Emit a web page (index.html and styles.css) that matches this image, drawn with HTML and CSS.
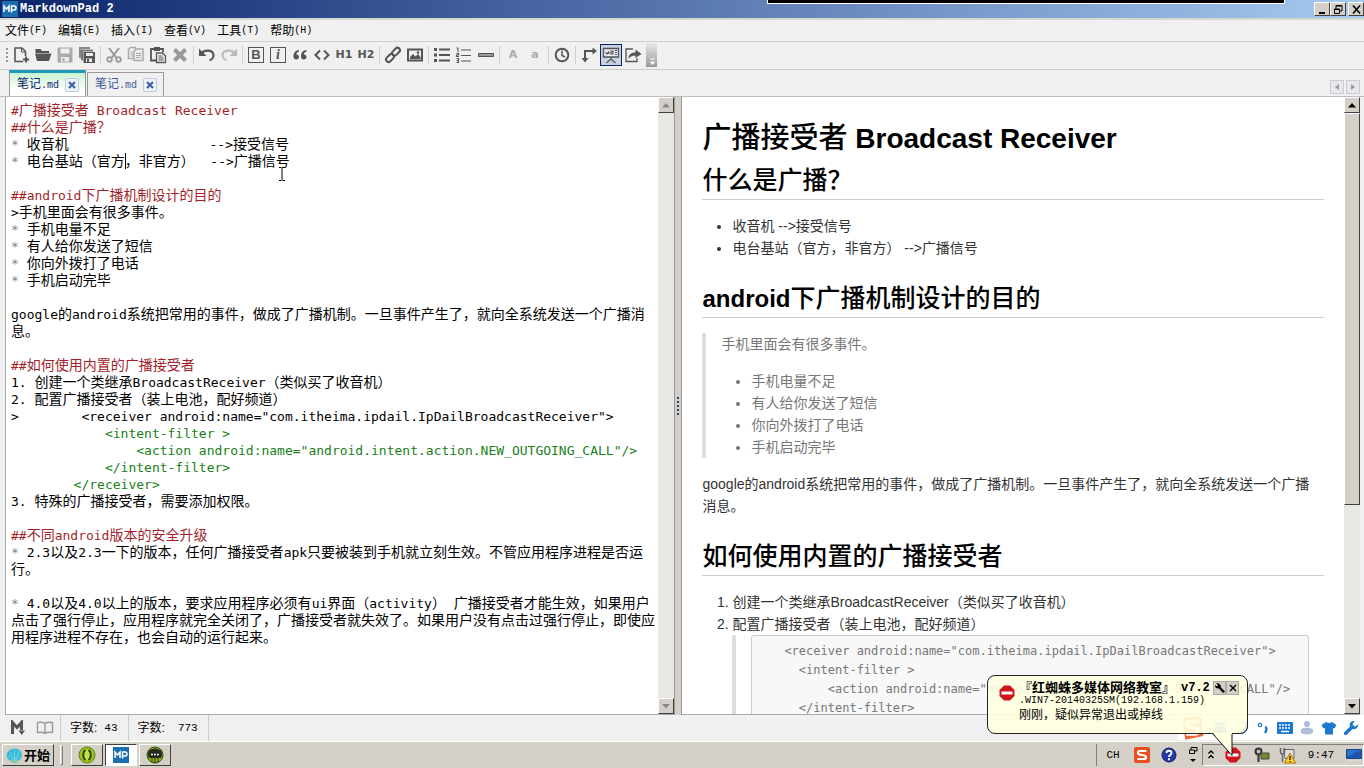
FILE: index.html
```html
<!DOCTYPE html>
<html lang="zh-CN">
<head>
<meta charset="utf-8">
<title>MarkdownPad 2</title>
<link rel="stylesheet" href="styles.css">
</head>
<body>
<div class="app">
  <header class="titlebar">
    <svg class="app-logo" width="16" height="16" viewBox="0 0 16 16"><rect width="16" height="16" fill="#1b6fae"/><path d="M2 11V5l2.500 3L7 5v6M9.500 11.500V5H12a2 2 0 010 4H9.500" fill="none" stroke="#fff" stroke-width="1.500"/></svg>
    <h1 class="titlebar-text">MarkdownPad 2</h1>
    <div class="window-buttons">
      <button class="win-btn" aria-label="最小化"><svg width="13" height="11"><path d="M3 9h6" stroke="#000" stroke-width="2"/></svg></button>
      <button class="win-btn" aria-label="还原"><svg width="13" height="11"><path d="M4 5V1.500h6V7H8M4 2h6M2.500 5h5v4.500h-5zM2 5.500h6" fill="none" stroke="#000"/></svg></button>
      <button class="win-btn win-close" aria-label="关闭"><svg width="13" height="11"><path d="M3 1.500l7 8M10 1.500l-7 8" stroke="#000" stroke-width="1.600"/></svg></button>
    </div>
    <div class="top-strip"></div>
  </header>

  <nav class="menubar">
    <button>文件<span class="key">(F)</span></button>
    <button>编辑<span class="key">(E)</span></button>
    <button>插入<span class="key">(I)</span></button>
    <button>查看<span class="key">(V)</span></button>
    <button>工具<span class="key">(T)</span></button>
    <button>帮助<span class="key">(H)</span></button>
  </nav>

  <div class="toolbar">
    <span class="grip"></span>
    <button aria-label="新建"><svg viewBox="0 0 18 18"><path d="M11 15.500H3V2h7l3.500 3.500V10" fill="none" stroke="#555" stroke-width="1.600"/><path d="M9.500 2v4h4" fill="none" stroke="#555"/><path d="M14 10.500v6M11 13.500h6" stroke="#555" stroke-width="2"/></svg></button>
    <button aria-label="打开"><svg viewBox="0 0 18 18"><path d="M1.500 3h5l1.500 2h7v2H1.500z" fill="#555"/><path d="M1 7.500H17.500l-2.500 7.500H3z" fill="#555"/></svg></button>
    <button aria-label="保存" class="off"><svg viewBox="0 0 18 18"><path d="M1.500 1.500h15v15h-15z" fill="#aaa"/><path d="M4.500 2.500h9v5h-9zM5 11h8v4.500H5z" fill="#eee"/><path d="M6.500 12h2v3h-2z" fill="#aaa"/></svg></button>
    <button aria-label="全部保存"><svg viewBox="0 0 18 18"><path d="M1 1h11v2H3v9H1z" fill="#888"/><path d="M3 3.500h12v2H5v9H3z" fill="#777"/><path d="M5.500 6h11.500v11H5.500z" fill="#555"/><path d="M8 7h7v3H8zM8 12.500h6V16H8z" fill="#eee"/><path d="M9 13h2v3H9z" fill="#555"/></svg></button>
    <i class="sep"></i>
    <button aria-label="剪切"><svg viewBox="0 0 18 18"><path d="M4 2l7.500 10M14 2L6.500 12" stroke="#999" stroke-width="2" fill="none"/><circle cx="4.500" cy="13.500" r="2.300" fill="none" stroke="#999" stroke-width="1.700"/><circle cx="13.500" cy="13.500" r="2.300" fill="none" stroke="#999" stroke-width="1.700"/></svg></button>
    <button aria-label="复制"><svg viewBox="0 0 18 18"><path d="M6.500 12.500h-5v-9l2-2h5v3" fill="none" stroke="#aaa" stroke-width="1.500"/><path d="M3.500 6h3M3.500 8h3M3.500 10h3" stroke="#aaa"/><path d="M7 5.500l2-2.500h7v11.500H7z" fill="#eee" stroke="#aaa" stroke-width="1.500"/><path d="M9 7.500h5M9 9.500h5M9 11.500h5" stroke="#aaa"/></svg></button>
    <button aria-label="粘贴"><svg viewBox="0 0 18 18"><path d="M7 14.500H2V3h12v3" fill="none" stroke="#555" stroke-width="1.800"/><path d="M5 1h6v4H5z" fill="#555"/><path d="M7.500 7h6l3 3v6.500h-9z" fill="#eee" stroke="#555" stroke-width="1.300"/><path d="M9.500 10h4M9.500 12h5M9.500 14h5" stroke="#555"/></svg></button>
    <button aria-label="删除"><svg viewBox="0 0 18 18"><path d="M3.500 3.500l11 11M14.500 3.500l-11 11" stroke="#999" stroke-width="4"/></svg></button>
    <i class="sep"></i>
    <button aria-label="撤消"><svg viewBox="0 0 18 18"><path d="M3.500 7.500C7 3 15 4 15.500 9c0 3-2 5-4 5" fill="none" stroke="#555" stroke-width="2.200"/><path d="M1 2.500V10h7.500z" fill="#555"/></svg></button>
    <button aria-label="重做"><svg viewBox="0 0 18 18"><path d="M14.500 7.500C11 3 3 4 2.500 9c0 3 2 5 4 5" fill="none" stroke="#bbb" stroke-width="2.200"/><path d="M17 2.500V10H9.500z" fill="#bbb"/></svg></button>
    <i class="sep"></i>
    <button class="boxed" aria-label="粗体"><b>B</b></button>
    <button class="boxed" aria-label="斜体"><em>i</em></button>
    <button aria-label="引用"><svg viewBox="0 0 18 18"><path d="M8 4C4 4.500 2.500 7 2.500 10.500c0 2 1 3 2.700 3S8 12.500 8 11 7 8.500 5.500 8.500C5.500 7 6.500 6 8 5.600zM15.500 4c-4 .5-5.500 3-5.500 6.500 0 2 1 3 2.700 3s2.800-1 2.800-2.500-1-2.500-2.500-2.500c0-1.500 1-2.500 2.500-2.900z" fill="#555"/></svg></button>
    <button aria-label="代码"><svg viewBox="0 0 18 18"><path d="M7 4.500L2.500 9 7 13.500M11 4.500L15.500 9 11 13.500" fill="none" stroke="#555" stroke-width="2"/></svg></button>
    <button class="label">H1</button>
    <button class="label">H2</button>
    <i class="sep"></i>
    <button aria-label="链接"><svg viewBox="0 0 18 18"><g fill="none" stroke="#555" stroke-width="2"><rect x="-4.500" y="-2.500" width="9" height="5" rx="2.500" transform="translate(12 5.700) rotate(-45)"/><rect x="-4.500" y="-2.500" width="9" height="5" rx="2.500" transform="translate(6 12) rotate(-45)"/></g></svg></button>
    <button aria-label="图片"><svg viewBox="0 0 18 18"><path d="M2 3.500h14v11H2z" fill="none" stroke="#555" stroke-width="2"/><path d="M4 13v-2l3-3 2.500 2.500L12 8l2.500 3v2z" fill="#555"/><circle cx="12" cy="6.500" r="1.300" fill="#555"/></svg></button>
    <i class="sep"></i>
    <button aria-label="无序列表"><svg viewBox="0 0 18 18"><path d="M1 3.500h3M1 9h3M1 14.500h3" stroke="#555" stroke-width="3"/><path d="M6 3.500h11M6 9h11M6 14.500h11" stroke="#555" stroke-width="2"/></svg></button>
    <button aria-label="有序列表"><svg viewBox="0 0 18 18"><path d="M6 4h10M6 9.500h10M6 15h10" stroke="#555" stroke-width="1.200"/><path d="M1.500 2H3v4M1.500 7.500h2v1.500h-2v1.500h2.500M1.500 12.500h2v4h-2M1.500 14.500h2" fill="none" stroke="#555" stroke-width="1.100"/></svg></button>
    <button aria-label="水平线"><svg viewBox="0 0 18 18"><path d="M1.500 7.500h15v3h-15z" fill="#999" stroke="#555"/></svg></button>
    <i class="sep"></i>
    <button class="label faint">A</button>
    <button class="label faint">a</button>
    <i class="sep"></i>
    <button aria-label="时间"><svg viewBox="0 0 18 18"><circle cx="9" cy="9" r="6.300" fill="none" stroke="#555" stroke-width="2"/><path d="M9 4.500V9.500l3 1.500" fill="none" stroke="#555" stroke-width="1.500"/></svg></button>
    <i class="sep"></i>
    <button aria-label="同步"><svg viewBox="0 0 18 18"><path d="M5 13V5h8" fill="none" stroke="#555" stroke-width="2"/><path d="M1.500 12h7L5 16.500zM12.500 1.500v7L17 5z" fill="#555"/></svg></button>
    <button class="pressed" aria-label="预览"><svg viewBox="0 0 18 18"><path d="M1.500 2.500h15v8.500h-15z" fill="#eee" stroke="#555" stroke-width="1.300"/><path d="M3.500 6l1.500 2 1.500-2 1 2M9 5v3h2V5zM13 4.500h2M13 6.500h2M13 8.500h2M9 11v3M9 13l-4.500 4M9 13l4.500 4" fill="none" stroke="#555" stroke-width="1.200"/></svg></button>
    <button aria-label="导出"><svg viewBox="0 0 18 18"><path d="M9 3H2v12.500h11V12" fill="none" stroke="#555" stroke-width="1.300"/><path d="M4.500 13c0-5 3-6.500 7-6.500V3.500L17.500 8 11.500 12V9.500c-3 0-5 .5-7 3.500z" fill="#555"/></svg></button>
    <button class="overflow" aria-label="更多"><svg viewBox="0 0 10 24"><path d="M3 16h5M3.500 19h4L5.500 21.500z" stroke="#fff" fill="#fff"/></svg></button>
  </div>

  <div class="tabs">
    <div class="tab active"><span>笔记<span class="key">.md</span></span><button class="tab-close" aria-label="关闭"><svg width="10" height="10"><path d="M2 2l6 6M8 2l-6 6" stroke="#33609c" stroke-width="2"/></svg></button></div>
    <div class="tab"><span>笔记<span class="key">.md</span></span><button class="tab-close" aria-label="关闭"><svg width="10" height="10"><path d="M2 2l6 6M8 2l-6 6" stroke="#33609c" stroke-width="2"/></svg></button></div>
    <div class="tab-nav">
      <button aria-label="上一个"><svg width="8" height="8"><path d="M6 1v6L2 4z" fill="#999"/></svg></button>
      <button aria-label="下一个"><svg width="8" height="8"><path d="M2 1v6l4-3z" fill="#999"/></svg></button>
    </div>
  </div>

  <main class="workspace">
    <section class="pane editor-pane">
      <div class="editor" role="textbox" aria-label="Markdown" aria-multiline="true" contenteditable="true" spellcheck="false">
        <div class="line head"><code>#</code>广播接受者<code> Broadcast Receiver</code></div>
        <div class="line head"><code>##</code>什么是广播？</div>
        <div class="line"><code><i>*</i> </code>收音机<code>                  --&gt;</code>接受信号</div>
        <div class="line"><code><i>*</i> </code>电台基站（官方<span class="caret"></span>，非官方）<code>  --&gt;</code>广播信号</div>
        <div class="line"></div>
        <div class="line head"><code>##android</code>下广播机制设计的目的</div>
        <div class="line"><code>&gt;</code>手机里面会有很多事件。</div>
        <div class="line"><code><i>*</i> </code>手机电量不足</div>
        <div class="line"><code><i>*</i> </code>有人给你发送了短信</div>
        <div class="line"><code><i>*</i> </code>你向外拨打了电话</div>
        <div class="line"><code><i>*</i> </code>手机启动完毕</div>
        <div class="line"></div>
        <div class="line"><code>google</code>的<code>android</code>系统把常用的事件，做成了广播机制。一旦事件产生了，就向全系统发送一个广播消</div>
        <div class="line">息。</div>
        <div class="line"></div>
        <div class="line head"><code>##</code>如何使用内置的广播接受者</div>
        <div class="line"><code>1. </code>创建一个类继承<code>BroadcastReceiver</code>（类似买了收音机）</div>
        <div class="line"><code>2. </code>配置广播接受者（装上电池，配好频道）</div>
        <div class="line"><code>&gt;        &lt;receiver android:name="com.itheima.ipdail.IpDailBroadcastReceiver"&gt;</code></div>
        <div class="line green"><code>            &lt;intent-filter &gt;</code></div>
        <div class="line green"><code>                &lt;action android:name="android.intent.action.NEW_OUTGOING_CALL"/&gt;</code></div>
        <div class="line green"><code>            &lt;/intent-filter&gt;</code></div>
        <div class="line green"><code>        &lt;/receiver&gt;</code></div>
        <div class="line"><code>3. </code>特殊的广播接受者，需要添加权限。</div>
        <div class="line"></div>
        <div class="line head"><code>##</code>不同<code>android</code>版本的安全升级</div>
        <div class="line"><code><i>*</i> 2.3</code>以及<code>2.3</code>一下的版本，任何广播接受者<code>apk</code>只要被装到手机就立刻生效。不管应用程序进程是否运</div>
        <div class="line">行。</div>
        <div class="line"></div>
        <div class="line"><code><i>*</i> 4.0</code>以及<code>4.0</code>以上的版本，要求应用程序必须有<code>ui</code>界面（<code>activity</code>）<code> </code>广播接受者才能生效，如果用户</div>
        <div class="line">点击了强行停止，应用程序就完全关闭了，广播接受者就失效了。如果用户没有点击过强行停止，即使应</div>
        <div class="line">用程序进程不存在，也会自动的运行起来。</div>
      </div>
      <div class="scrollbar">
        <button aria-label="向上"><svg width="8" height="5"><path d="M0 4.500L4 0l4 4.500z" fill="#888"/></svg></button>
        <button aria-label="向下"><svg width="8" height="5"><path d="M0 0l4 4.500L8 0z" fill="#888"/></svg></button>
      </div>
    </section>
    <div class="splitter"></div>
    <section class="pane preview-pane">
      <article class="preview">
        <h1><span class="zh">广播接受者</span> Broadcast Receiver</h1>
        <h2><span class="zh">什么是广播？</span></h2>
        <ul>
          <li>收音机 --&gt;接受信号</li>
          <li>电台基站（官方，非官方） --&gt;广播信号</li>
        </ul>
        <h2>android<span class="zh">下广播机制设计的目的</span></h2>
        <blockquote>
          <p>手机里面会有很多事件。</p>
          <ul>
            <li>手机电量不足</li>
            <li>有人给你发送了短信</li>
            <li>你向外拨打了电话</li>
            <li>手机启动完毕</li>
          </ul>
        </blockquote>
        <p>google的android系统把常用的事件，做成了广播机制。一旦事件产生了，就向全系统发送一个广播消息。</p>
        <h2><span class="zh">如何使用内置的广播接受者</span></h2>
        <ol>
          <li>创建一个类继承BroadcastReceiver（类似买了收音机）</li>
          <li>配置广播接受者（装上电池，配好频道）
            <blockquote><pre>    &lt;receiver android:name="com.itheima.ipdail.IpDailBroadcastReceiver"&gt;
      &lt;intent-filter &gt;
          &lt;action android:name="android.intent.action.NEW_OUTGOING_CALL"/&gt;
      &lt;/intent-filter&gt;</pre></blockquote>
          </li>
        </ol>
      </article>
      <div class="scrollbar">
        <button aria-label="向上"><svg width="8" height="5"><path d="M0 4.500L4 0l4 4.500z" fill="#000"/></svg></button>
        <div class="track"><div class="thumb"></div></div>
        <button aria-label="向下"><svg width="8" height="5"><path d="M0 0l4 4.500L8 0z" fill="#000"/></svg></button>
      </div>
    </section>
  </main>

  <footer class="statusbar">
    <div class="cell icons">
      <svg width="16" height="16" viewBox="0 0 16 16"><path d="M2.500 14V2.500l4.500 5 4.500-5V10" fill="none" stroke="#555" stroke-width="3"/><path d="M8.500 10.500h6.500L11.700 15z" fill="#555"/></svg>
      <svg width="18" height="14" viewBox="0 0 18 14"><path d="M9 2.500C7 1 4 1 1.500 1.500v10C4 11 7 11 9 12.500 11 11 14 11 16.500 11.500v-10C14 1 11 1 9 2.500v10" fill="none" stroke="#999" stroke-width="1.400"/></svg>
    </div>
    <div class="cell">字数:<span class="key count">43</span></div>
    <div class="cell">字数:<span class="key count wide">773</span></div>
  </footer>

  <footer class="taskbar">
    <button class="start"><svg width="17" height="17" viewBox="0 0 17 17"><path d="M8.500 1.500C13 1.500 16.500 5 16 9c-.5 3-4 6-7.500 6S1 12 .5 9 4 1.500 8.500 1.500z" fill="#39b9d3"/><path d="M8.500 14V3M8.500 14L4 4.500M8.500 14L13 4.500M8.500 14L1.500 8M8.500 14l7-6" stroke="#6fd6e8" stroke-width="1"/><path d="M4 13h9l-2 3H6z" fill="#8ec5b5"/></svg><span>开始</span></button>
    <i class="bar-divider"></i>
    <button class="task" aria-label="编辑器"><svg width="18" height="18" viewBox="0 0 18 18"><circle cx="9" cy="9" r="8" fill="#9bc31c" stroke="#647f10"/><circle cx="9" cy="9" r="5" fill="#c5e24a"/><path d="M7.500 4C4.500 6 4.500 12 7.500 14M10.500 4c3 2 3 8 0 10" fill="none" stroke="#334508" stroke-width="2"/></svg></button>
    <button class="task current" aria-label="MarkdownPad"><svg width="16" height="16" viewBox="0 0 16 16"><rect width="16" height="16" fill="#1b6fae"/><path d="M2 11V5l2.500 3L7 5v6M9.500 11.500V5H12a2 2 0 010 4H9.500" fill="none" stroke="#fff" stroke-width="1.500"/></svg></button>
    <button class="task" aria-label="终端"><svg width="18" height="18" viewBox="0 0 18 18"><circle cx="9" cy="9" r="8" fill="#8fb51d" stroke="#394a10"/><path d="M3 4.500q6-4 12 0a8 8 0 010 7.500H3a8 8 0 010-7.500z" fill="#252b22"/><path d="M5 8.500h2M8 8.500h2M11 8.500h2" stroke="#eee" stroke-width="1.500"/><path d="M6 12v4M9 12v5M12 12v4" stroke="#283609"/></svg></button>
    <div class="tray">
      <span class="lang key">CH</span>
      <span class="t25"><svg width="16" height="16" viewBox="0 0 16 16"><rect width="16" height="16" rx="2" fill="#ea4d1f"/><path d="M12.500 4H6Q3.500 4 4 6q0 1.500 4 2 4.500.5 4 2.500Q12 12 9.500 12H3.500" fill="none" stroke="#fff" stroke-width="2.200"/></svg></span>
      <span class="t30"><svg width="16" height="16" viewBox="0 0 16 16"><circle cx="8" cy="8" r="7" fill="#2338a5" stroke="#14206d"/><path d="M5.500 6C5.500 3 10.500 3 10.500 6 10.500 8 8 7.800 8 10M8 11.200v2" fill="none" stroke="#fff" stroke-width="1.900"/></svg></span>
      <span class="t18"><svg width="10" height="18" viewBox="0 0 10 18"><path d="M3 4V1.500h6V5H7M1.500 4h5v3.500h-5z" fill="none" stroke="#000"/><path d="M2 13h6l-3 3z"/></svg></span>
      <div class="notify">
        <span class="t16"><svg width="8" height="12" viewBox="0 0 8 12"><path d="M1.500 4.500L4 2l2.500 2.500M1.500 9L4 6.500 6.500 9" fill="none" stroke="#000" stroke-width="1.300"/></svg></span>
        <span class="t28"><svg width="16" height="16" viewBox="0 0 16 16"><path d="M5 .5h6L15.500 5v6L11 15.500H5L.5 11V5z" fill="#ce1620"/><path d="M2.500 8h11" stroke="#fff" stroke-width="3"/></svg></span>
        <span class="t30"><svg width="16" height="16" viewBox="0 0 16 16"><circle cx="4.500" cy="4.500" r="3" fill="#bbb" stroke="#333" stroke-width="2"/><path d="M4.500 7v8" stroke="#444" stroke-width="2.400"/><path d="M7 6h8v6H7z" fill="#728a2c" stroke="#444"/></svg></span>
        <span class="t20"><svg width="17" height="17" viewBox="0 0 17 17"><path d="M4.500 2.500H15v9H6z" fill="#ddd" stroke="#666"/><path d="M1.500 1v4q0 2 2 2t2-2V1M3.500 7v8" fill="none" stroke="#666" stroke-width="1.500"/><path d="M11 6l5.500 10h-11z" fill="#ffd52b" stroke="#aa7400"/><path d="M11 9v4M11 14v1" stroke="#000" stroke-width="1.200"/></svg></span>
        <time class="clock key">9:47</time>
        <span class="t18"><svg width="16" height="14" viewBox="0 0 16 14"><path d="M.5 1.500h15v9H.5z" fill="#2f71c9" stroke="#17468d"/><path d="M1 8C6 8 9 3 15 3v7H1z" fill="#1d57ad"/><path d="M3 12.500h10" stroke="#ddd"/></svg></span>
      </div>
    </div>
  </footer>

  <div class="ime">
    <svg class="ime-logo" width="27" height="26" viewBox="0 0 30 28"><path d="M4 3L24 1l3 22-20 4z" fill="#f2653a"/><path d="M23 7H13q-5 0-4 3 0 3 7 3.500 7 .5 6 4-1 3-5 3H8" fill="none" stroke="#fff" stroke-width="4"/></svg>
    <span class="ime-mode">英</span>
    <svg width="22" height="16" viewBox="0 0 16 16"><path d="M11 1c3 6-1 11-8 11 5 5 13 0 12-7-.5-2-2-3.500-4-4z" fill="#1d78cf"/></svg>
    <svg width="22" height="14" viewBox="0 0 12 14"><circle cx="3" cy="4" r="1.700" fill="none" stroke="#1d78cf" stroke-width="1.200"/><path d="M8 6q3 1 0 6" stroke="#1d78cf" stroke-width="2.400" fill="none"/></svg>
    <svg width="22" height="14" viewBox="0 0 17 14"><rect x=".5" y="1" width="16" height="12" rx="1" fill="#1d78cf"/><path d="M2.500 4h12M2.500 7h12" stroke="#fff" stroke-width="1.500" stroke-dasharray="2 1"/><path d="M4.500 10.500h8" stroke="#fff" stroke-width="1.500"/></svg>
    <svg width="22" height="16" viewBox="0 0 14 16"><circle cx="7" cy="4" r="3" fill="#b1bcd9"/><path d="M1 9q6-3 12 0v4q-6 3-12 0z" fill="#b1bcd9"/></svg>
    <svg width="22" height="14" viewBox="0 0 16 14"><path d="M5 1q3 2 6 0l4.500 3-2 3.500L12 7v6.500H4V7l-1.500.5L.5 4z" fill="#1d78cf"/></svg>
    <svg width="22" height="16" viewBox="0 0 16 16"><path d="M15 4.500l-3 2.300-2.500-2.300L11.500 1C8 .5 6 3.500 7 6.500L1 12.500q-.5 3 2.500 2.500L9.500 9c3.500 1 6-1.500 5.500-4.500z" fill="#1d78cf"/></svg>
  </div>

  <aside class="balloon">
    <svg class="stop" width="16" height="16" viewBox="0 0 16 16"><path d="M5 .5h6L15.500 5v6L11 15.500H5L.5 11V5z" fill="#ce1620"/><path d="M2.500 8h11" stroke="#fff" stroke-width="3"/></svg>
    <div class="balloon-text">
      <div class="balloon-head"><strong>『红蜘蛛多媒体网络教室』</strong><strong class="key version">v7.2</strong>
        <button aria-label="设置"><svg width="12" height="12" viewBox="0 0 12 12"><path d="M2 1l2 2-1 1.500L1 3q0 4 4 3.500L9 11l2-1.500L7 5.500Q7 1 2 1z" fill="#000"/></svg></button><button aria-label="关闭"><svg width="12" height="12" viewBox="0 0 12 12"><path d="M3 3l6 6M9 3L3 9" stroke="#000" stroke-width="1.400"/></svg></button>
      </div>
      <div class="key host">.WIN7-20140325SM(192.168.1.159)</div>
      <div class="message">刚刚，疑似异常退出或掉线</div>
    </div>
    <svg class="tail" width="22" height="24" viewBox="0 0 22 24"><path d="M1 0L20 22.500V0z" fill="#ffffe1"/><path d="M1 1L20 22.500V1" fill="none" stroke="#111"/></svg>
  </aside>

  <svg class="ibeam" width="8" height="16" viewBox="0 0 8 16"><path d="M1 1.500h2.500M4.500 1.500H7M4 2v12M1 14.500h2.500M4.500 14.500H7" stroke="#000"/></svg>
</div>
</body>
</html>
```

FILE: styles.css
```css
* { box-sizing: border-box; }
body { margin: 0; font: 12px/16px "Liberation Sans", "Noto Sans CJK SC", sans-serif; color: #000; }
button { margin: 0; padding: 0; border: 0; background: none; font: inherit; color: inherit; display: flex; align-items: center; justify-content: center; }
svg { display: block; flex: none; }
.key { font-family: "Liberation Mono", monospace; font-size: 10px; }
.app { position: relative; height: 100vh; display: flex; flex-direction: column; background: #f0f0f0; overflow: hidden; }

.titlebar { position: relative; flex: none; height: 20px; display: flex; align-items: center; padding-left: 2px; background: linear-gradient(90deg, #0a246a, #5877b0 50%, #a6caf0); border-bottom: 2px solid #d4d8d0; }
.titlebar-text { margin: 0 0 0 2px; font: bold 12px/16px "Liberation Mono", monospace; color: #fff; }
.window-buttons { margin-left: auto; display: flex; }
.win-btn { width: 16px; height: 14px; background: #d4d0c8; border: 1px solid; border-color: #fff #404040 #404040 #fff; }
.win-close { margin-left: 2px; }
.top-strip { position: absolute; top: 0; right: 79px; width: 38%; height: 4px; background: #000; border: 1px solid #fff; border-top: 0; }

.menubar { flex: none; height: 22px; display: flex; align-items: center; gap: 11px; padding-left: 5px; border-bottom: 1px solid #d0d0d0; }
.menubar button { height: 20px; }

.toolbar { flex: none; height: 28px; display: flex; align-items: center; padding-bottom: 1px; border-bottom: 1px solid #ccc; color: #555; }
.toolbar button { width: 22px; height: 22px; }
.toolbar svg { width: 18px; height: 18px; }
.grip { width: 2px; height: 15px; margin: 0 2px 0 6px; background: repeating-linear-gradient(#999 0 2px, transparent 2px 4px); }
.sep { width: 1px; height: 18px; margin: 0 2px; background: #d0d0d0; }
.boxed b, .boxed em { width: 16px; height: 16px; border: 1px solid #555; font: bold 13px/14px "Liberation Sans", sans-serif; }
.boxed em { font: italic bold 14px/14px "Liberation Serif", serif; }
.toolbar .label { font: bold 11px/14px "DejaVu Sans", sans-serif; }
.toolbar .faint { color: #aaa; }
.toolbar .pressed { background: #c9d1e3; border: 1px solid #0a246a; }
.toolbar .overflow { width: 11px; height: 24px; margin-left: 2px; background: linear-gradient(#e8e8e8, #999); }
.toolbar .overflow svg { width: 10px; height: 24px; }

.tabs { flex: none; height: 27px; display: flex; align-items: flex-end; gap: 1px; padding: 0 4px 0 9px; border-bottom: 1px solid #bbb; }
.tab { height: 24px; display: flex; align-items: center; gap: 6px; padding: 0 6px 0 7px; border: 1px solid #999; border-bottom: 0; color: #3c5a9a; }
.tab.active { height: 26px; border-top: 3px solid #1c9cb8; background: linear-gradient(#c9f3d0, #fff 75%); color: #0a246a; }
.tab-close { width: 14px; height: 14px; border: 1px solid #c0cad8; border-radius: 2px; background: #edf2f8; }
.tab-nav { margin-left: auto; align-self: center; display: flex; gap: 2px; padding-top: 7px; }
.tab-nav button { width: 14px; height: 14px; border: 1px solid #ccc; background: #e6e8ee; }

.workspace { flex: 1; min-height: 0; display: grid; grid-template-columns: 669fr 8px 677fr; grid-template-rows: minmax(0, 1fr); padding: 0 4px 0 5px; }
.pane { min-width: 0; min-height: 0; display: flex; background: #fff; border-bottom: 1px solid #aaa; overflow: hidden; }
.editor-pane { border-left: 1px solid #aaa; }
.editor { flex: 1; min-width: 0; padding: 4px 0 0 5px; overflow: hidden; outline: 0; font: 14px/17px "Noto Sans CJK SC", sans-serif; }
.line { height: 17px; white-space: pre; }
.line code { font: 13px/17px "DejaVu Sans Mono", monospace; }
.line i { font-style: normal; color: #888; }
.head { color: #a31f2b; }
.green { color: #1a7f1a; }
.caret { display: inline-block; width: 1px; height: 16px; margin-right: -1px; background: #000; vertical-align: -3px; }
.splitter { border: solid #999; border-width: 0 1px; background: #d4d0c8; display: flex; align-items: center; justify-content: center; }
.splitter::before { content: ""; width: 2px; height: 18px; background: repeating-linear-gradient(#33417a 0 2px, transparent 2px 4px); }

.scrollbar { flex: none; width: 16px; display: flex; flex-direction: column; justify-content: space-between; background: #e8e7e3; }
.scrollbar button, .thumb { background: #d4d0c8; border: 1px solid; border-color: #fff #404040 #404040 #fff; }
.scrollbar button { height: 16px; }
.track { flex: 1; }
.thumb { height: 67%; }

.preview { flex: 1; min-width: 0; padding: 24px 20px 0; overflow: hidden; font: 14px/22px "Liberation Sans", "Noto Sans CJK SC", sans-serif; color: #333; }
.preview h1, .preview h2 { color: #000; font-weight: bold; }
.preview h1 { margin: 0 0 11px; font-size: 28px; line-height: 34px; height: 34px; }
.preview h2 { margin: 25px 0 15px; height: 34px; padding-bottom: 5px; border-bottom: 1px solid #ccc; font-size: 24px; line-height: 28px; }
.preview h1 + h2 { margin-top: 11px; }
.zh { font-weight: 500; font-size: 25px; }
.preview h1 .zh { font-size: 29px; }
.preview ul, .preview ol { margin: 15px 0; padding-left: 30px; }
.preview p { margin: 15px 0; padding-right: 4px; }
.preview blockquote { margin: 15px 0; padding: 0 15px; border-left: 4px solid #ddd; color: #777; }
.preview blockquote > :first-child { margin-top: 0; }
.preview blockquote > :last-child { margin-bottom: 0; }
.preview li blockquote { margin: 0; }
.preview pre { padding: 6px 3px; border: 1px solid #ccc; border-radius: 3px; background: #f8f8f8; font: 12px/19px "DejaVu Sans Mono", monospace; }

.statusbar { flex: none; height: 26px; display: flex; align-items: stretch; }
.cell { display: flex; align-items: center; padding: 0 10px 0 9px; border-right: 1px solid #ccc; }
.icons { gap: 10px; padding: 0 6px 0 10px; }
.statusbar .count { font-size: 11px; margin-left: 7px; }
.statusbar .wide { margin-left: 13px; }

.taskbar { flex: none; height: 27px; display: flex; align-items: center; padding-left: 2px; background: #d4d0c8; border-top: 1px solid #fff; }
.start, .task { height: 22px; border: 1px solid; border-color: #fff #404040 #404040 #fff; }
.start { width: 52px; gap: 1px; font: bold 13px/18px "Noto Sans CJK SC", sans-serif; }
.bar-divider { width: 3px; height: 20px; margin: 0 8px 0 6px; border: 1px solid; border-color: #fff #808080 #808080 #fff; }
.task { width: 32px; margin-right: 2px; }
.task.current { background: #fff; border-color: #404040 #fff #fff #404040; }
.tray { margin-left: auto; display: flex; align-items: center; height: 22px; border-left: 1px solid #808080; }
.tray span { display: flex; justify-content: center; }
.notify { height: 22px; display: flex; align-items: center; border: 1px solid; border-color: #808080 #fff #fff #808080; }
.lang { width: 32px; }
.tray .key { font-size: 11px; }
.t16 { width: 16px; }
.t18 { width: 18px; }
.t20 { width: 20px; }
.t25 { width: 25px; }
.t28 { width: 28px; }
.t30 { width: 30px; }
.clock { width: 48px; text-align: center; }

.ime { position: absolute; right: 0; bottom: 28px; height: 25px; display: flex; align-items: center; padding: 0 2px 0 1px; background: #fff; }
.ime-logo { margin-right: 7px; }
.ime-mode { margin-right: 3px; font: bold 14px/18px "Noto Sans CJK SC", sans-serif; color: #1d78cf; }

.balloon { position: absolute; right: 116px; bottom: 34px; display: flex; gap: 4px; width: 261px; height: 59px; padding: 5px 8px 0 11px; background: rgba(255, 255, 225, .9); border: 1px solid #222; border-radius: 8px; }
.stop { margin-top: 4px; }
.balloon-text { flex: 1; white-space: nowrap; line-height: 16px; }
.balloon-head { display: flex; align-items: center; height: 14px; font-size: 13px; }
.balloon-head .version { flex: 1; padding-left: 6px; font-size: 12px; }
.balloon-head button { width: 13px; height: 14px; border: 1px solid #aaa; background: #d4d0c8; }
.balloon .host { font-size: 10px; line-height: 12px; }
.tail { position: absolute; right: 13px; top: 57px; }
.ibeam { position: absolute; left: 278px; top: 166px; }
```
